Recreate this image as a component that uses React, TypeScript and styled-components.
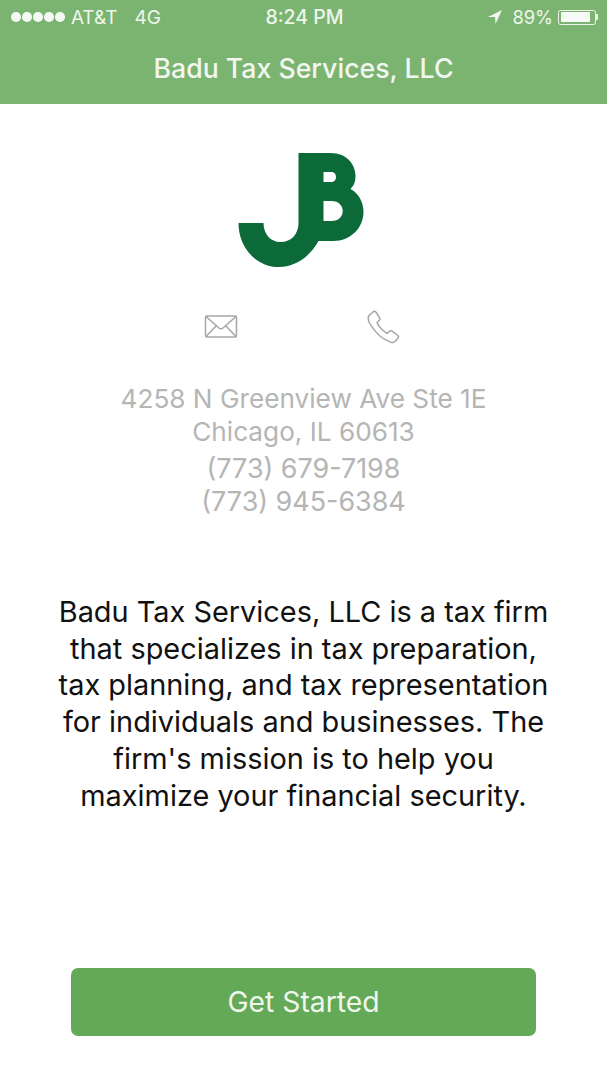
import React from "react";
import styled, { createGlobalStyle } from "styled-components";

const Global = createGlobalStyle`
  html, body { margin: 0; padding: 0; background: #fff; }
  body { font-family: Inter, "Liberation Sans", sans-serif; }
`;

const Page = styled.div`
  width: 607px;
  height: 1080px;
  display: flex;
  flex-direction: column;
  align-items: center;
  overflow: hidden;
  background: #fff;
`;

const Header = styled.header`
  width: 100%;
  height: 104px;
  background: #7bb471;
  color: #f1f7ef;
  display: flex;
  flex-direction: column;
`;

const StatusBar = styled.div`
  height: 34px;
  padding: 0 9px 0 11px;
  display: grid;
  grid-template-columns: 1fr auto 1fr;
  align-items: center;
  font-size: 19px;
  color: #eef6ec;
`;

const StatusLeft = styled.div`
  display: flex;
  align-items: center;
`;

const Dots = styled.div`
  display: flex;
  gap: 1.6px;
  margin-right: 6px;
`;

const Dot = styled.span`
  width: 9.5px;
  height: 9.5px;
  border-radius: 50%;
  background: #f4f9f3;
`;

const Network = styled.span`
  margin-left: 17px;
`;

const Clock = styled.div`
  font-weight: 500;
  font-size: 19.5px;
`;

const StatusRight = styled.div`
  display: flex;
  align-items: center;
  justify-content: flex-end;
  gap: 10px;
  font-size: 18.3px;
`;

const BatteryGroup = styled.div`
  display: flex;
  align-items: center;
`;

const BatteryBody = styled.div`
  width: 38px;
  height: 15px;
  box-sizing: border-box;
  border: 1px solid #eef6ec;
  border-radius: 2.5px;
  padding: 1.5px;
  margin-left: 5px;
  display: flex;
`;

const BatteryFill = styled.div`
  background: #f6faf5;
  border-radius: 1px;
  height: 100%;
`;

const BatteryCap = styled.div`
  width: 2px;
  height: 6px;
  background: #eef6ec;
  border-radius: 0 1px 1px 0;
`;

const Title = styled.h1`
  margin: 0;
  flex: 1;
  display: flex;
  align-items: center;
  justify-content: center;
  font-size: 26.7px;
  font-weight: 500;
  padding-bottom: 2px;
`;

const Logo = styled.svg`
  display: block;
  width: 140px;
  height: 120px;
  margin-top: 46px;
`;

const Contacts = styled.div`
  display: flex;
  justify-content: center;
  gap: 128px;
  margin-top: 37px;
  margin-right: 3px;
  height: 40px;
  align-items: center;
`;

const IconSvg = styled.svg`
  display: block;
  fill: none;
  stroke: #a6a6a6;
  stroke-width: 1.5;
  stroke-linejoin: round;
  stroke-linecap: round;
`;

const Address = styled.div`
  margin-top: 35px;
  text-align: center;
  color: #b5b5b5;
  font-size: 26.2px;
  line-height: 33px;
`;

const Phones = styled.div`
  text-align: center;
  color: #b5b5b5;
  font-size: 26.9px;
  line-height: 33px;
  margin-top: 4px;
`;

const About = styled.p`
  margin: 76px 0 0;
  text-align: center;
  color: #111;
  font-size: 28.9px;
  line-height: 36.7px;
`;

const StartButton = styled.button`
  width: 465px;
  height: 68px;
  margin-top: auto;
  margin-bottom: 44px;
  border: 0;
  border-radius: 7px;
  background: #64a957;
  color: #eff7ec;
  font-family: inherit;
  font-size: 28.3px;
`;

export default function App() {
  return (
    <Page>
      <Global />
      <Header>
        <StatusBar>
          <StatusLeft>
            <Dots>
              {[0, 1, 2, 3, 4].map((i) => (
                <Dot key={i} />
              ))}
            </Dots>
            AT&amp;T
            <Network>4G</Network>
          </StatusLeft>
          <Clock>8:24 PM</Clock>
          <StatusRight>
            <svg width="14" height="14" viewBox="0 0 14 14">
              <path d="M14 0 L0 7 L7 7 L7.5 14 Z" fill="#f1f7ef" />
            </svg>
            <BatteryGroup>
              89%
              <BatteryBody>
                <BatteryFill style={{ width: "89%" }} />
              </BatteryBody>
              <BatteryCap />
            </BatteryGroup>
          </StatusRight>
        </StatusBar>
        <Title>Badu Tax Services, LLC</Title>
      </Header>

      <Logo viewBox="233.5 150 140 120">
        <path
          fill="#0c6a38"
          fillRule="evenodd"
          d="M298 153 H330 C347 153 355 165 355 176 C355 182 353 186 350 189 C358 193 363 202 363 212 C363 228 350 241 333 241 H318 C309 257 295 267 278 267 C256 267 238 248 238 223 H263 C263 234 270 242 280 242 C291 242 298 234 298 223 Z M323 172 V182 H331 C337 182 337 172 331 172 Z M323 201 V221 H331 C346 221 346 201 331 201 Z"
        />
      </Logo>

      <Contacts>
        <IconSvg width="34" height="26" viewBox="0 0 34 26">
          <rect x="1.5" y="2" width="31" height="21" rx="1.5" />
          <path d="M2 2.5 L15 14 Q17 15.5 19 14 L32 2.5 M2 22.5 L12.5 11.5 M32 22.5 L21.5 11.5" />
        </IconSvg>
        <IconSvg width="34" height="34" viewBox="0 0 34 34">
          <path d="M3 5.5 L7.5 1.5 Q8.8 0.8 9.8 2 L13.8 8.2 Q14.3 9.5 13.2 10.5 L11 12.5 Q13 18 21 23.5 L23.6 21.2 Q24.8 20.4 26 21.2 L32 25.5 Q33 26.6 32 28 L29 31.5 Q27.5 33 25 32.3 Q12 28 3.5 13 Q1.2 8.5 3 5.5 Z" />
        </IconSvg>
      </Contacts>

      <Address>
        4258 N Greenview Ave Ste 1E
        <br />
        Chicago, IL 60613
      </Address>
      <Phones>
        (773) 679-7198
        <br />
        (773) 945-6384
      </Phones>

      <About>
        Badu Tax Services, LLC is a tax firm
        <br />
        that specializes in tax preparation,
        <br />
        tax planning, and tax representation
        <br />
        for individuals and businesses. The
        <br />
        firm's mission is to help you
        <br />
        maximize your financial security.
      </About>

      <StartButton>Get Started</StartButton>
    </Page>
  );
}
